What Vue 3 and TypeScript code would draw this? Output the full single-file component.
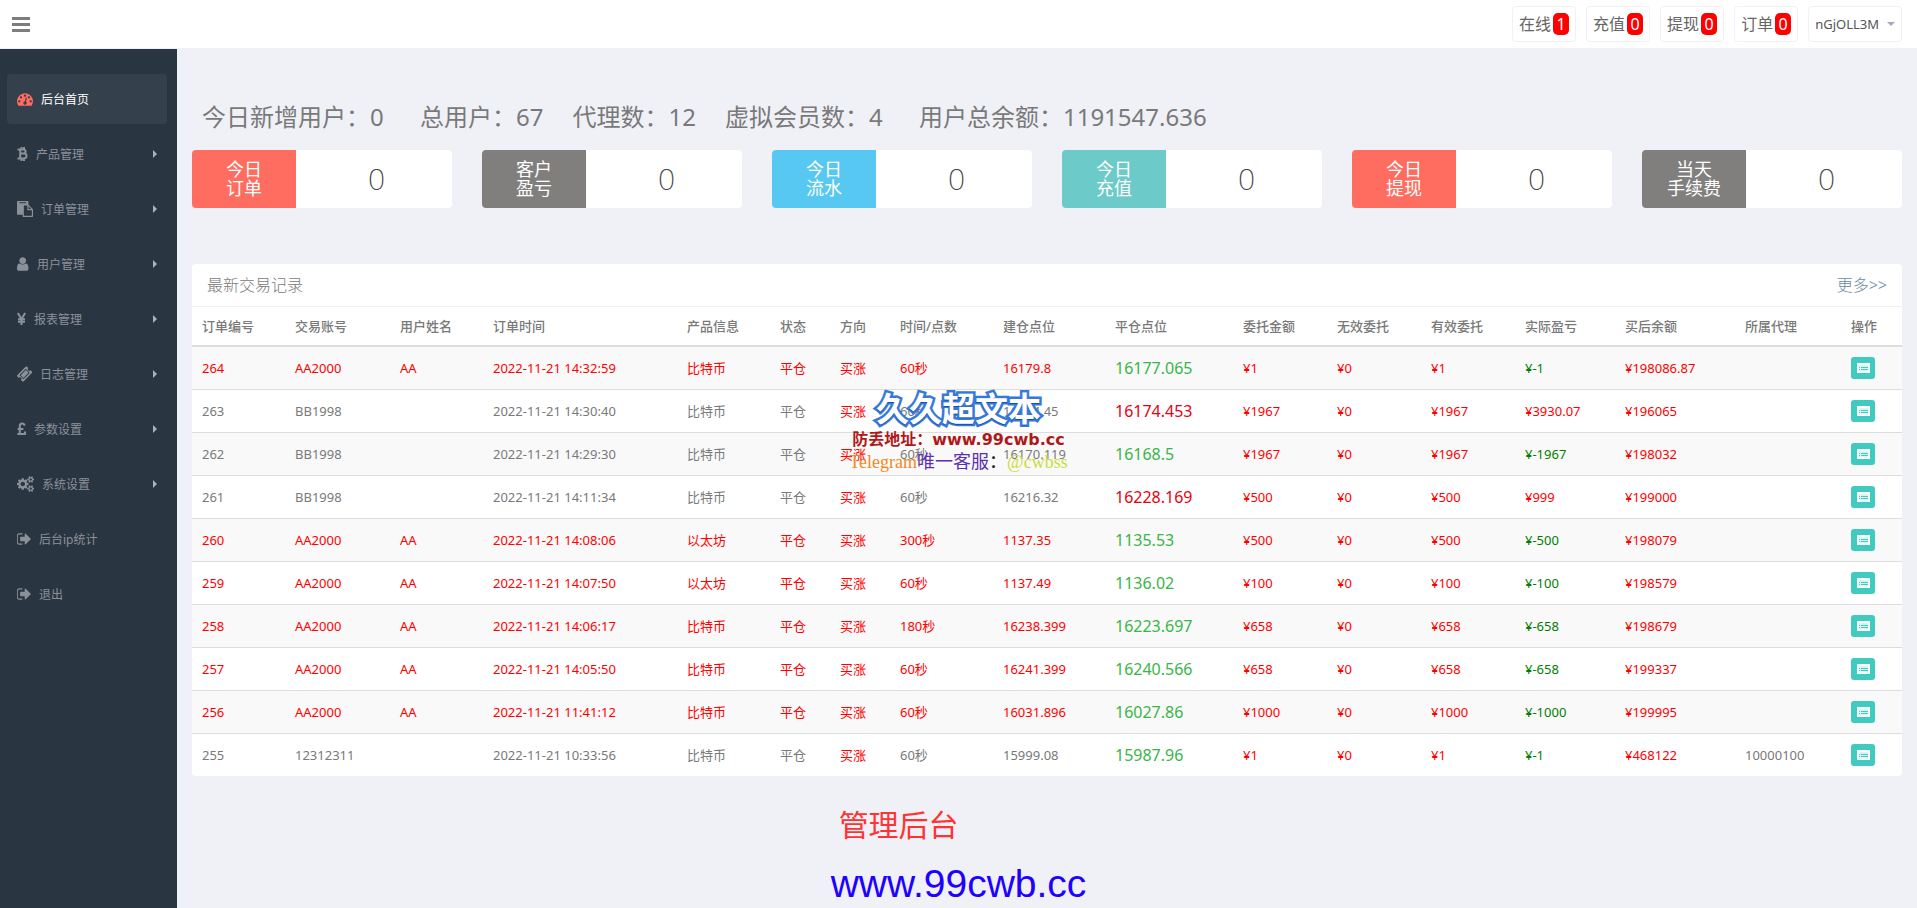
<script setup lang="ts">
interface NavItem { label: string; icon: string; children?: boolean; active?: boolean }
interface Icon { box: string; width: number; fill?: string[]; stroke?: string }
interface Column { title: string; weight: number }
interface Order {
  id: number; account: string; name: string; time: string; product: string
  duration: string; open: string; close: string; up: boolean
  amount: string; profit: string; balance: string; agent: string
}

const SIGN_OUT = 'M704 1440q0 4 1 20t.5 26.5-3 23.5-10 19.5-20.5 6.5h-320q-119 0-203.5-84.5t-84.5-203.5v-704q0-119 84.5-203.5t203.5-84.5h320q13 0 22.5 9.5t9.5 22.5q0 4 1 20t.5 26.5-3 23.5-10 19.5-20.5 6.5h-320q-66 0-113 47t-47 113v704q0 66 47 113t113 47h312l11.5 1 11.5 3 8 5.5 7 9 2 13.5zm928-544q0 26-19 45l-544 544q-19 19-45 19t-45-19-19-45v-288h-448q-26 0-45-19t-19-45v-384q0-26 19-45t45-19h448v-288q0-26 19-45t45-19 45 19l544 544q19 19 19 45z'
const COG_SMALL = 'v140q0 16-149 31-12 27-30 52 51 113 51 138 0 4-4 7-122 71-124 71-8 0-46-47t-52-68q-20 2-30 2t-30-2q-14 21-52 68t-46 47q-2 0-124-71-4-3-4-7 0-25 51-138-18-25-30-52-149-15-149-31v-140q0-16 149-31 13-29 30-52-51-113-51-138 0-4 4-7 4-2 35-20t59-34 30-16q8 0 46 46.5t52 67.5q20-2 30-2t30 2q51-71 92-112l6-2q4 0 124 70 4 3 4 7 0 25-51 138 17 23 30 52 149 15 149 31z'

const icons: Record<string, Icon> = {
  dashboard: { box: '0 0 1792 1792', width: 16, fill: ['M384 1152q0-53-37.5-90.5t-90.5-37.5-90.5 37.5-37.5 90.5 37.5 90.5 90.5 37.5 90.5-37.5 37.5-90.5zm192-448q0-53-37.5-90.5t-90.5-37.5-90.5 37.5-37.5 90.5 37.5 90.5 90.5 37.5 90.5-37.5 37.5-90.5zm428 481l101-382q6-26-7.5-48.5t-38.5-29.5-48 6.5-30 39.5l-101 382q-60 5-107 43.5t-63 98.5q-20 77 20 146t117 89 146-20 89-117q16-60-6-117t-72-91zm660-33q0-53-37.5-90.5t-90.5-37.5-90.5 37.5-37.5 90.5 37.5 90.5 90.5 37.5 90.5-37.5 37.5-90.5zm-640-640q0-53-37.5-90.5t-90.5-37.5-90.5 37.5-37.5 90.5 37.5 90.5 90.5 37.5 90.5-37.5 37.5-90.5zm448 192q0-53-37.5-90.5t-90.5-37.5-90.5 37.5-37.5 90.5 37.5 90.5 90.5 37.5 90.5-37.5 37.5-90.5zm320 448q0 261-141 483-19 29-54 29h-1402q-35 0-54-29-141-221-141-483 0-182 71-348t191-286 286-191 348-71 348 71 286 191 191 286 71 348z'] },
  bitcoin: { box: '0 0 11 16', width: 11, stroke: 'M.5 3.5H6.2C9.4 3.5 9.4 7.6 6.2 7.6H3.2M3.2 7.6H6.6C10.6 7.6 10.6 12.5 6.6 12.5H.5M3.2 3.5V12.5M4.5 1V3.5M7 1V3.5M4.5 12.5V15M7 12.5V15' },
  paste: { box: '0 0 1792 1792', width: 16, fill: ['M768 1664h896v-640h-416q-40 0-68-28t-28-68v-416h-384v1152zm256-1440v-64q0-13-9.5-22.5t-22.5-9.5h-704q-13 0-22.5 9.5t-9.5 22.5v64q0 13 9.5 22.5t22.5 9.5h704q13 0 22.5-9.5t9.5-22.5zm256 672h299l-299-299v299zm512 128v672q0 40-28 68t-68 28h-960q-40 0-68-28t-28-68v-160h-544q-40 0-68-28t-28-68v-1344q0-40 28-68t68-28h1088q40 0 68 28t28 68v328q21 13 36 28l408 408q28 28 48 76t20 88z'] },
  user: { box: '256 0 1344 1792', width: 12, fill: ['M1536 1399q0 109-62.5 187t-150.5 78h-854q-88 0-150.5-78t-62.5-187q0-85 8.5-160.5t31.5-152 58.5-131 94-89 134.5-34.5q131 128 313 128t313-128q76 0 134.5 34.5t94 89 58.5 131 31.5 152 8.5 160.5zm-256-887q0 159-112.5 271.5t-271.5 112.5-271.5-112.5-112.5-271.5 112.5-271.5 271.5-112.5 271.5 112.5 112.5 271.5z'] },
  yen: { box: '0 0 9 16', width: 9, stroke: 'M.8 2L4.5 8L8.2 2M4.5 8V14M1 8.2H8M1 10.8H8' },
  ticket: { box: '40 0 1680 1792', width: 15, fill: ['M1024 452l316 316-572 572-316-316zm-211 979l618-618q19-19 19-45t-19-45l-362-362q-18-18-45-18t-45 18l-618 618q-19 19-19 45t19 45l362 362q18 18 45 18t45-18zm889-637l-907 908q-37 37-90.5 37t-90.5-37l-126-126q56-56 56-136t-56-136-136-56-136 56l-125-126q-37-37-37-90.5t37-90.5l907-906q37-37 90.5-37t90.5 37l125 125q-56 56-56 136t56 136 136 56 136-56l126 125q37 37 37 90.5t-37 90.5z'] },
  pound: { box: '0 0 9 16', width: 9, stroke: 'M7.6 4.6C7 1.8 2.8 1.8 2.8 5V13M.6 8H6.4M.4 13H8V10.4' },
  cogs: { box: '0 0 1904 1792', width: 17, fill: ['M896 896q0-106-75-181t-181-75-181 75-75 181 75 181 181 75 181-75 75-181zm768 512q0-52-38-90t-90-38-90 38-38 90q0 53 37.5 90.5t90.5 37.5 90.5-37.5 37.5-90.5zm0-1024q0-52-38-90t-90-38-90 38-38 90q0 53 37.5 90.5t90.5 37.5 90.5-37.5 37.5-90.5zm-384 421v185q0 10-7 19.5t-16 10.5l-155 24q-11 35-32 76 34 48 90 115 7 11 7 20 0 12-7 19-23 30-82.5 89.5t-78.5 59.5q-11 0-21-7l-115-90q-37 19-77 31-11 108-23 155-7 24-30 24h-186q-11 0-20-7.5t-10-17.5l-23-153q-34-10-75-31l-118 89q-7 7-20 7-11 0-21-8-144-133-144-160 0-9 7-19 10-14 41-53t47-61q-23-44-35-82l-152-24q-10-1-17-9.5t-7-19.5v-185q0-10 7-19.5t16-10.5l155-24q11-35 32-76-34-48-90-115-7-11-7-20 0-12 7-20 22-30 82-89t79-59q11 0 21 7l115 90q34-18 77-32 11-108 23-154 7-24 30-24h186q11 0 20 7.5t10 17.5l23 153q34 10 75 31l118-89q8-7 20-7 11 0 21 8 144 133 144 160 0 8-7 19-12 16-42 54t-45 60q23 48 34 82l152 23q10 2 17 10.5t7 19.5zm640 533' + COG_SMALL + 'm0-1024' + COG_SMALL] },
  signout: { box: '96 0 1568 1792', width: 14, fill: [SIGN_OUT] },
}

const nav: NavItem[] = [
  { label: '后台首页', icon: 'dashboard', active: true },
  { label: '产品管理', icon: 'bitcoin', children: true },
  { label: '订单管理', icon: 'paste', children: true },
  { label: '用户管理', icon: 'user', children: true },
  { label: '报表管理', icon: 'yen', children: true },
  { label: '日志管理', icon: 'ticket', children: true },
  { label: '参数设置', icon: 'pound', children: true },
  { label: '系统设置', icon: 'cogs', children: true },
  { label: '后台ip统计', icon: 'signout' },
  { label: '退出', icon: 'signout' },
]

const alerts = [
  { label: '在线', count: 1 }, { label: '充值', count: 0 },
  { label: '提现', count: 0 }, { label: '订单', count: 0 },
]

const summary = [
  { label: '今日新增用户：', value: '0' }, { label: '总用户：', value: '67' },
  { label: '代理数：', value: '12' }, { label: '虚拟会员数：', value: '4' },
  { label: '用户总余额：', value: '1191547.636' },
]

const cards = [
  { lines: ['今日', '订单'], tone: 'red', value: 0 },
  { lines: ['客户', '盈亏'], tone: 'gray', value: 0 },
  { lines: ['今日', '流水'], tone: 'blue', value: 0 },
  { lines: ['今日', '充值'], tone: 'teal', value: 0 },
  { lines: ['今日', '提现'], tone: 'red', value: 0 },
  { lines: ['当天', '手续费'], tone: 'gray', value: 0 },
]

const columns: Column[] = [
  { title: '订单编号', weight: 93 }, { title: '交易账号', weight: 105 }, { title: '用户姓名', weight: 93 },
  { title: '订单时间', weight: 194 }, { title: '产品信息', weight: 93 }, { title: '状态', weight: 60 },
  { title: '方向', weight: 60 }, { title: '时间/点数', weight: 103 }, { title: '建仓点位', weight: 112 },
  { title: '平仓点位', weight: 128 }, { title: '委托金额', weight: 94 }, { title: '无效委托', weight: 94 },
  { title: '有效委托', weight: 94 }, { title: '实际盈亏', weight: 100 }, { title: '买后余额', weight: 120 },
  { title: '所属代理', weight: 106 }, { title: '操作', weight: 61 },
]
const totalWeight = columns.reduce((sum, c) => sum + c.weight, 0)

type Row = [number, string, string, string, string, string, string, string, boolean, string, string, string, string]
const rows: Row[] = [
  [264, 'AA2000', 'AA', '2022-11-21 14:32:59', '比特币', '60秒', '16179.8', '16177.065', false, '1', '-1', '198086.87', ''],
  [263, 'BB1998', '', '2022-11-21 14:30:40', '比特币', '60秒', '16174.45', '16174.453', true, '1967', '3930.07', '196065', ''],
  [262, 'BB1998', '', '2022-11-21 14:29:30', '比特币', '60秒', '16170.119', '16168.5', false, '1967', '-1967', '198032', ''],
  [261, 'BB1998', '', '2022-11-21 14:11:34', '比特币', '60秒', '16216.32', '16228.169', true, '500', '999', '199000', ''],
  [260, 'AA2000', 'AA', '2022-11-21 14:08:06', '以太坊', '300秒', '1137.35', '1135.53', false, '500', '-500', '198079', ''],
  [259, 'AA2000', 'AA', '2022-11-21 14:07:50', '以太坊', '60秒', '1137.49', '1136.02', false, '100', '-100', '198579', ''],
  [258, 'AA2000', 'AA', '2022-11-21 14:06:17', '比特币', '180秒', '16238.399', '16223.697', false, '658', '-658', '198679', ''],
  [257, 'AA2000', 'AA', '2022-11-21 14:05:50', '比特币', '60秒', '16241.399', '16240.566', false, '658', '-658', '199337', ''],
  [256, 'AA2000', 'AA', '2022-11-21 11:41:12', '比特币', '60秒', '16031.896', '16027.86', false, '1000', '-1000', '199995', ''],
  [255, '12312311', '', '2022-11-21 10:33:56', '比特币', '60秒', '15999.08', '15987.96', false, '1', '-1', '468122', '10000100'],
]
const orders: Order[] = rows.map(([id, account, name, time, product, duration, open, close, up, amount, profit, balance, agent]) =>
  ({ id, account, name, time, product, duration, open, close, up, amount, profit, balance, agent }))
</script>

<template>
  <div class="page">
    <header class="topbar">
      <button class="toggle" type="button" aria-label="菜单"><span></span><span></span><span></span></button>
      <div class="actions">
        <button v-for="a in alerts" :key="a.label" type="button" class="alert">
          {{ a.label }}<span class="badge">{{ a.count }}</span>
        </button>
        <button type="button" class="account">nGjOLL3M<i class="caret"></i></button>
      </div>
    </header>

    <div class="body">
      <nav class="sidebar">
        <a v-for="item in nav" :key="item.label" href="#" class="nav-item" :class="{ active: item.active }">
          <svg class="nav-icon" :viewBox="icons[item.icon].box" :width="icons[item.icon].width" height="16" aria-hidden="true">
            <path v-for="d in icons[item.icon].fill" :key="d" :d="d" fill="currentColor" />
            <path v-if="icons[item.icon].stroke" :d="icons[item.icon].stroke" fill="none" stroke="currentColor" stroke-width="2" />
          </svg>
          <span class="nav-label">{{ item.label }}</span>
          <i v-if="item.children" class="arrow"></i>
        </a>
      </nav>

      <main class="content">
        <div class="summary">
          <span v-for="s in summary" :key="s.label">{{ s.label }}<span class="value">{{ s.value }}</span></span>
        </div>

        <section class="cards">
          <div v-for="c in cards" :key="c.lines.join('')" class="card">
            <div class="card-label" :class="c.tone"><span v-for="l in c.lines" :key="l">{{ l }}</span></div>
            <div class="card-value">{{ c.value }}</div>
          </div>
        </section>

        <section class="panel">
          <div class="panel-head">
            <h2>最新交易记录</h2>
            <a href="#">更多&gt;&gt;</a>
          </div>
          <table>
            <colgroup>
              <col v-for="c in columns" :key="c.title" :style="{ width: (c.weight / totalWeight) * 100 + '%' }" />
            </colgroup>
            <thead>
              <tr><th v-for="c in columns" :key="c.title" scope="col">{{ c.title }}</th></tr>
            </thead>
            <tbody>
              <tr v-for="o in orders" :key="o.id" :class="{ marked: o.name }">
                <td>{{ o.id }}</td>
                <td>{{ o.account }}</td>
                <td>{{ o.name }}</td>
                <td>{{ o.time }}</td>
                <td>{{ o.product }}</td>
                <td>平仓</td>
                <td class="money">买涨</td>
                <td>{{ o.duration }}</td>
                <td>{{ o.open }}</td>
                <td class="close" :class="{ up: o.up }">{{ o.close }}</td>
                <td class="money">¥{{ o.amount }}</td>
                <td class="money">¥0</td>
                <td class="money">¥{{ o.amount }}</td>
                <td :class="o.profit.startsWith('-') ? 'loss' : 'money'">¥{{ o.profit }}</td>
                <td class="money">¥{{ o.balance }}</td>
                <td>{{ o.agent }}</td>
                <td>
                  <button type="button" class="detail" aria-label="详情">
                    <svg viewBox="0 0 13 10" width="13" height="10" aria-hidden="true">
                      <rect width="13" height="10" rx="1" fill="#fff" fill-opacity=".8" />
                      <path d="M0 1H13M.5 1V10M12.5 1V10M0 9.5H13" stroke="#fff" stroke-width="2" />
                      <path d="M2 4.5H3M4 4.5H11M2 6.5H3M4 6.5H11" stroke="#41cac0" />
                    </svg>
                  </button>
                </td>
              </tr>
            </tbody>
          </table>
        </section>
      </main>
    </div>

    <div class="mark mark-top">
      <div class="mark-title">久久超文本</div>
      <div class="mark-site">防丢地址：<span>www.99cwb.cc</span></div>
      <div class="mark-contact"><span class="app">Telegram</span><span class="service">唯一客服</span><span class="colon">：</span><span class="handle">@cwbss</span></div>
    </div>
    <div class="mark mark-bottom">
      <div class="mark-name">管理后台</div>
      <div class="mark-url">www.99cwb.cc</div>
    </div>
  </div>
</template>

<style>
body { margin: 0; background: #f0f1f7; }
</style>

<style scoped>
* { box-sizing: border-box; }
.page {
  position: relative;
  display: flex;
  flex-direction: column;
  min-height: 100vh;
  background: #f0f1f7;
  color: #797979;
  font: 13px/20px "Noto Sans", "Noto Sans CJK SC", sans-serif;
}
button { font: inherit; color: inherit; cursor: pointer; }
a { text-decoration: none; }

.topbar {
  display: flex;
  align-items: center;
  justify-content: space-between;
  height: 48px;
  padding: 0 15px 0 12px;
  background: #fff;
}
.toggle { display: flex; flex-direction: column; gap: 3px; padding: 0; border: 0; background: none; }
.toggle span { width: 18px; height: 3px; background: #7d7d7d; }
.actions { display: flex; gap: 10px; }
.alert, .account {
  display: flex;
  align-items: center;
  height: 36px;
  padding: 0 6px;
  border: 1px solid #f0f1f7;
  border-radius: 4px;
  background: #fff;
}
.alert { gap: 2px; font-size: 16px; color: #666; }
.badge { min-width: 16px; padding: 0 3px; border-radius: 5px; background: #f00; color: #fff; line-height: 22px; }
.account { gap: 8px; color: #555; }
.caret { border: 4px solid transparent; border-top-color: #a4aab8; border-bottom: 0; }

.body { display: flex; flex: 1; }
.sidebar {
  flex: 0 0 177px;
  display: flex;
  flex-direction: column;
  gap: 5px;
  margin-top: 1px;
  padding: 25px 10px 0 7px;
  background: #2a3542;
}
.nav-item {
  display: flex;
  align-items: center;
  height: 50px;
  padding: 0 10px;
  border-radius: 4px;
  color: #8b9199;
  font-size: 12px;
}
.nav-icon { margin-right: 8px; }
.nav-label { padding-top: 2px; }
.active { background: #35404d; color: #fff; }
.active .nav-icon { color: #ff6c60; }
.arrow { margin-left: auto; border: 4px solid transparent; border-left-color: #aeb2b7; border-right: 0; }

.content { flex: 1; min-width: 0; padding: 48px 15px 15px; }
.summary {
  display: flex;
  flex-wrap: wrap;
  gap: 0 29px;
  padding: 0 10px;
  margin-bottom: 12px;
  font-size: 24px;
  line-height: 42px;
}
.value { display: inline-block; min-width: 21px; }
.cards { display: grid; grid-template-columns: repeat(6, 1fr); gap: 30px; }
.card { display: flex; height: 58px; border-radius: 4px; overflow: hidden; background: #fff; }
.card-label {
  flex: 0 0 40%;
  display: flex;
  flex-direction: column;
  align-items: center;
  justify-content: center;
  color: #fff;
  font-size: 18px;
  line-height: 19px;
}
.card-value {
  flex: 1;
  padding-left: 5px;
  color: #444;
  font-size: 30px;
  font-weight: 200;
  line-height: 58px;
  text-align: center;
}
.red { background: #ff6c60; }
.gray { background: #817f7e; }
.blue { background: #57c8f2; }
.teal { background: #6ccac9; }

.panel { margin-top: 56px; border-radius: 4px; overflow: hidden; background: #fff; }
.panel-head {
  display: flex;
  align-items: center;
  justify-content: space-between;
  height: 43px;
  padding: 0 15px;
  border-bottom: 1px solid #eff0f4;
  font-size: 16px;
  font-weight: 300;
}
.panel-head h2 { margin: 0; font: inherit; }
.panel-head a { color: #688ba5; }
table { width: 100%; table-layout: fixed; border-spacing: 0; }
th, td { padding: 0 10px; text-align: left; white-space: nowrap; }
th { height: 40px; border-bottom: 2px solid #ddd; font-weight: 500; }
td { height: 43px; border-top: 1px solid #ddd; }
tbody tr:first-child td { height: 42px; border-top: 0; }
tbody tr:nth-child(odd) { background: #f9f9f9; }
.marked, .money { color: #f00; }
.loss { color: #008000; }
.close { color: #39b54a; font-size: 16px; }
.close.up { color: #e60012; }
.detail {
  display: flex;
  align-items: center;
  justify-content: center;
  width: 24px;
  height: 22px;
  padding: 0;
  border: 0;
  border-radius: 3px;
  background: #41cac0;
}

.mark { position: absolute; left: 50%; transform: translateX(-50%); white-space: nowrap; pointer-events: none; }
.mark-top { top: 388px; display: flex; flex-direction: column; align-items: center; }
.mark-title {
  color: #fff;
  font-size: 33px;
  font-weight: 700;
  line-height: 42px;
  -webkit-text-stroke: 5px #3579dc;
  paint-order: stroke fill;
  text-shadow: 0 1px 0 #1c4fa8;
}
.mark-site { color: #b01818; font-size: 16px; font-weight: 700; line-height: 18px; }
.mark-site span { font-family: "DejaVu Sans", sans-serif; }
.mark-contact { font: 18px/26px "Liberation Serif", "Noto Sans CJK SC", serif; }
.app { color: #f08a24; }
.service { color: #5b2fb0; }
.colon { color: #222; }
.handle { color: #cddc39; }
.mark-bottom { top: 803px; }
.mark-name { padding-left: 8px; color: #f33; font-size: 30px; line-height: 44px; }
.mark-url { color: #2000ff; font: 39px/74px "Liberation Sans", Arial, sans-serif; }
</style>
